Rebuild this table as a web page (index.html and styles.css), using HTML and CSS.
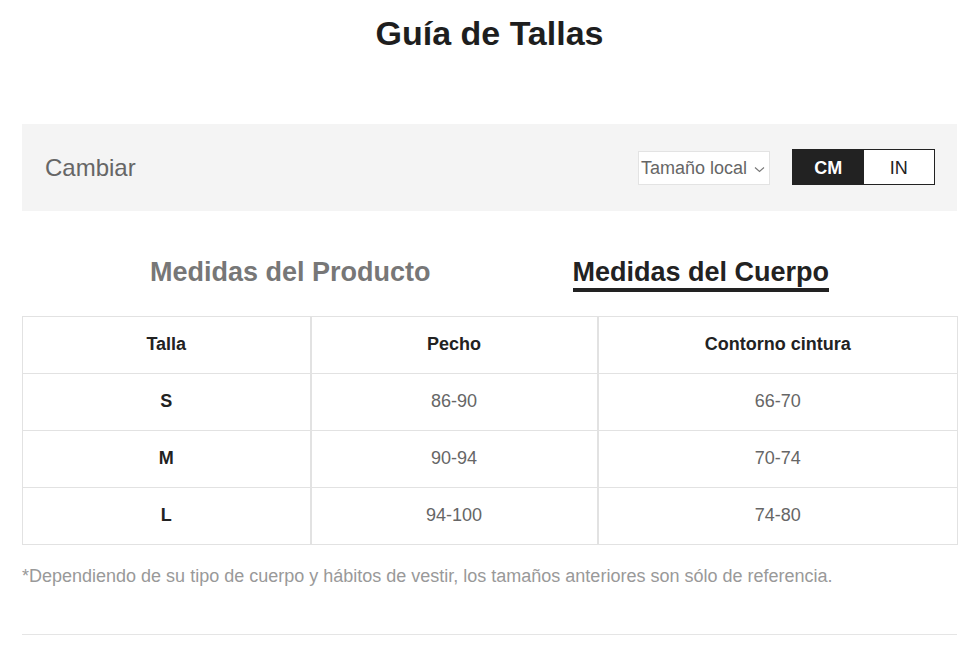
FILE: index.html
```html
<!DOCTYPE html>
<html lang="es">
<head>
<meta charset="utf-8">
<title>Guía de Tallas</title>
<link rel="stylesheet" href="styles.css">
</head>
<body>
<div class="page">
  <h1 class="title">Guía de Tallas</h1>
  <div class="bar">
    <span class="bar-label">Cambiar</span>
    <div class="bar-controls">
      <div class="select">
        <span>Tamaño local</span>
        <svg class="chev" width="11" height="7" viewBox="0 0 11 7"><path d="M1 1.5 L5.5 5.5 L10 1.5" fill="none" stroke="#777" stroke-width="1.1"/></svg>
      </div>
      <div class="toggle">
        <span class="opt active">CM</span>
        <span class="opt">IN</span>
      </div>
    </div>
  </div>
  <div class="tabs">
    <span class="tab">Medidas del Producto</span>
    <span class="tab active">Medidas del Cuerpo</span>
  </div>
  <table class="sizes">
    <colgroup><col class="c1"><col class="c2"><col class="c3"></colgroup>
    <thead>
      <tr><th>Talla</th><th>Pecho</th><th>Contorno cintura</th></tr>
    </thead>
    <tbody>
      <tr><td class="size">S</td><td>86-90</td><td>66-70</td></tr>
      <tr><td class="size">M</td><td>90-94</td><td>70-74</td></tr>
      <tr><td class="size">L</td><td>94-100</td><td>74-80</td></tr>
    </tbody>
  </table>
  <p class="note">*Dependiendo de su tipo de cuerpo y hábitos de vestir, los tamaños anteriores son sólo de referencia.</p>
  <div class="rule"></div>
</div>
</body>
</html>
```
FILE: styles.css
```css
* { box-sizing: border-box; }
html, body { margin: 0; padding: 0; background: #fff; }
body { font-family: "Liberation Sans", Arial, sans-serif; color: #222; }
.page { margin: 0 18px 0 22px; }
.title {
  margin: 0;
  padding-top: 13px;
  height: 54px;
  font-size: 34px;
  line-height: 40px;
  font-weight: bold;
  text-align: center;
  color: #1e1e1e;
}
.bar {
  margin-top: 70px;
  height: 87px;
  background: #f4f4f4;
  display: flex;
  align-items: center;
  justify-content: space-between;
  padding: 0 22px 0 23px;
}
.bar-label { font-size: 24px; color: #666; }
.bar-controls { display: flex; align-items: center; gap: 22px; }
.select {
  width: 132px;
  height: 34px;
  background: #fff;
  border: 1px solid #e3e3e3;
  display: flex;
  align-items: center;
  padding-left: 2px;
  padding-top: 2px;
  gap: 7px;
  font-size: 18px;
  color: #666;
}
.chev { margin-top: 2px; }
.toggle {
  display: flex;
  width: 143px;
  height: 36px;
  margin-top: -1px;
  border: 1px solid #222;
  background: #fff;
}
.opt {
  flex: 1;
  display: flex;
  align-items: center;
  justify-content: center;
  padding-top: 2px;
  font-size: 18px;
  color: #222;
}
.opt.active { background: #222; color: #fff; font-weight: bold; }
.tabs {
  display: flex;
  justify-content: center;
  gap: 142px;
  margin-top: 45px;
}
.tab {
  font-size: 27px;
  line-height: 32px;
  font-weight: bold;
  color: #777;
  padding-bottom: 0;
  border-bottom: 4px solid transparent;
}
.tab.active { color: #222; border-bottom-color: #222; }
.sizes {
  margin-top: 24px;
  width: 935px;
  border-collapse: collapse;
  table-layout: fixed;
}
.c1 { width: 288px; }
.c2 { width: 287px; }
.c3 { width: 360px; }
.sizes th, .sizes td {
  height: 57px;
  border: 1px solid #e2e2e2;
  text-align: center;
  font-size: 18px;
  padding: 0 0 2px;
}
.sizes td + td, .sizes th + th { border-left: 2px solid #e2e2e2; }
.sizes th { font-weight: bold; color: #222; }
.sizes td { color: #666; }
.sizes td.size { font-weight: bold; color: #222; }
.note {
  margin: 21px 0 0;
  font-size: 18px;
  line-height: 20px;
  color: #999;
}
.rule {
  margin-top: 48px;
  height: 1px;
  background: #e5e5e5;
}
```
